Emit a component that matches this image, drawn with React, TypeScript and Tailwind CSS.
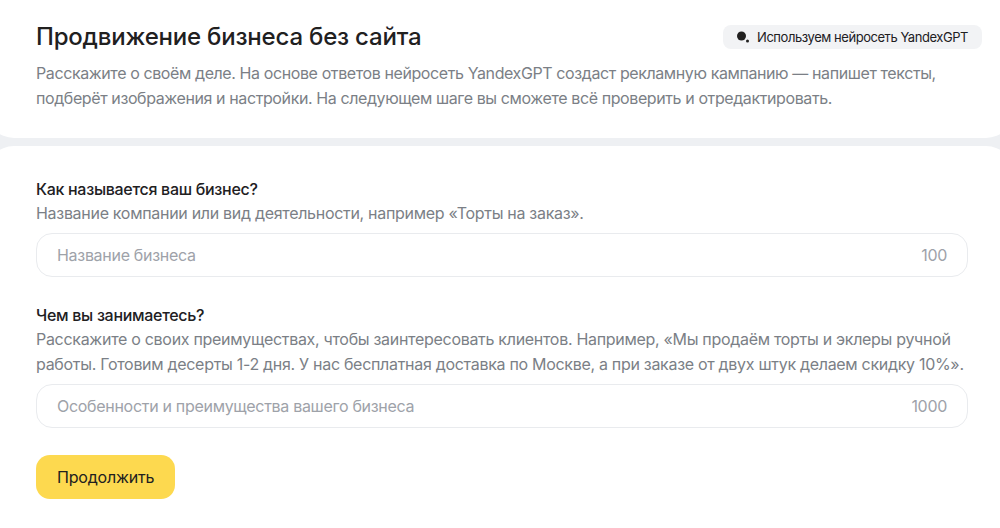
export default function App() {
  return (
    <div
      className="min-h-[528px] w-[1000px] overflow-hidden bg-[#eef0f3] text-[#21201f]"
      style={{ fontFamily: "Inter, 'Noto Sans', sans-serif" }}
    >
      <section className="-mx-[14px] rounded-b-[28px] bg-white pb-[27px] pl-[50px] pr-[32px] pt-[23px]">
        <div className="flex items-start justify-between">
          <h1 className="text-[24px] font-medium leading-[28px] tracking-[-0.2px]">
            Продвижение бизнеса без сайта
          </h1>
          <div className="mt-[2px] flex h-6 items-center gap-[7px] rounded-lg bg-[#f2f3f5] pl-[13px] pr-[14px] text-[13px] leading-none tracking-[-0.45px]">
            <svg width="14" height="12" viewBox="0 0 14 12">
              <circle cx="5.5" cy="5" r="4.5" fill="#21201f" />
              <circle cx="11.5" cy="10" r="1.5" fill="#21201f" />
            </svg>
            Используем нейросеть YandexGPT
          </div>
        </div>
        <p className="mt-[10px] whitespace-nowrap text-[16px] leading-[25px] tracking-[-0.4px] text-[#7b7f86]">
          Расскажите о своём деле. На основе ответов нейросеть YandexGPT создаст рекламную кампанию — напишет тексты,
          <br />
          подберёт изображения и настройки. На следующем шаге вы сможете всё проверить и отредактировать.
        </p>
      </section>

      <section className="-mx-[14px] mt-2 rounded-t-[28px] bg-white pb-8 pl-[50px] pr-[46px] pt-[31px]">
        <h2 className="text-[16px] font-medium leading-6 tracking-[-0.3px]">Как называется ваш бизнес?</h2>
        <p className="whitespace-nowrap text-[16px] leading-[25px] tracking-[-0.3px] text-[#7b7f86]">
          Название компании или вид деятельности, например «Торты на заказ».
        </p>
        <div className="mt-[7px] flex h-11 items-center justify-between rounded-2xl border border-[#e9ebee] px-5 text-[16px] tracking-[-0.3px] text-[#9ea2a9]">
          <span>Название бизнеса</span>
          <span>100</span>
        </div>

        <h2 className="mt-[26px] text-[16px] font-medium leading-6 tracking-[-0.3px]">Чем вы занимаетесь?</h2>
        <p className="whitespace-nowrap text-[16px] leading-[25px] tracking-[-0.3px] text-[#7b7f86]">
          Расскажите о своих преимуществах, чтобы заинтересовать клиентов. Например, «Мы продаём торты и эклеры ручной
          <br />
          работы. Готовим десерты 1-2 дня. У нас бесплатная доставка по Москве, а при заказе от двух штук делаем скидку 10%».
        </p>
        <div className="mt-[7px] flex h-11 items-center justify-between rounded-2xl border border-[#e9ebee] px-5 text-[16px] tracking-[-0.3px] text-[#9ea2a9]">
          <span>Особенности и преимущества вашего бизнеса</span>
          <span>1000</span>
        </div>

        <button className="mt-[27px] flex h-11 items-center rounded-[14px] bg-[#fdd94f] px-[21px] text-[16px] tracking-[-0.2px] text-[#21201f]">
          Продолжить
        </button>
      </section>
    </div>
  );
}
